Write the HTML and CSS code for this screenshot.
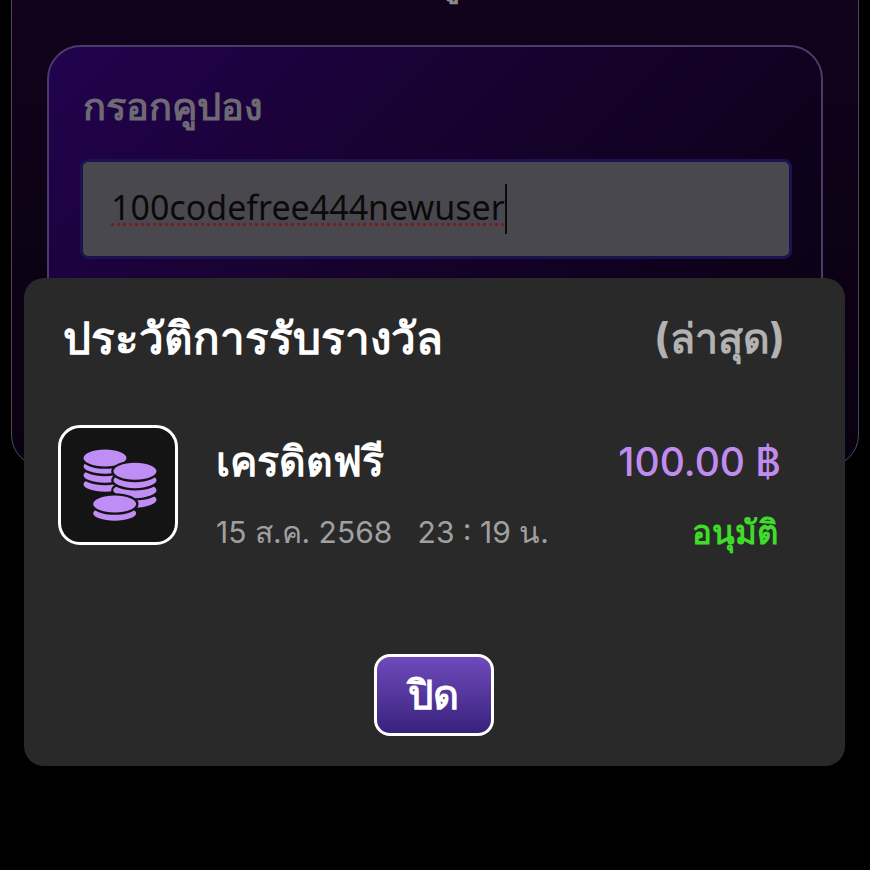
FILE: index.html
```html
<!DOCTYPE html>
<html lang="th">

<head>
    <meta charset="UTF-8">
    <meta name="viewport" content="width=device-width, initial-scale=1.0">
    <title>ประวัติการรับรางวัล</title>
    <link rel="stylesheet" href="styles.css">
</head>

<body>
    <div class="page">
        <div class="outer">
            <div class="page-title">กรอกโค้ดคูปอง</div>
            <div class="coupon">
                <div class="coupon-label">กรอกคูปอง</div>
                <div class="coupon-input">
                    <span class="coupon-value">100codefree444newuser</span><span class="caret"></span>
                </div>
            </div>
        </div>

        <div class="modal">
            <div class="modal-head">
                <div class="modal-title">ประวัติการรับรางวัล</div>
                <div class="modal-latest">(ล่าสุด)</div>
            </div>

            <div class="reward">
                <div class="reward-icon">
                    <svg viewBox="112 106 240 240" width="80" height="80">
                        <g fill="#c08cf5" stroke="#141414" stroke-width="7">
                            <!-- left stack -->
                            <ellipse cx="193" cy="224" rx="68" ry="26"></ellipse>
                            <ellipse cx="193" cy="197" rx="68" ry="26"></ellipse>
                            <ellipse cx="193" cy="170" rx="68" ry="26"></ellipse>
                            <ellipse cx="193" cy="145" rx="68" ry="29"></ellipse>
                            <!-- right stack -->
                            <ellipse cx="283" cy="270" rx="68" ry="27"></ellipse>
                            <ellipse cx="283" cy="242" rx="68" ry="27"></ellipse>
                            <ellipse cx="283" cy="212" rx="68" ry="27"></ellipse>
                            <ellipse cx="283" cy="185" rx="68" ry="29"></ellipse>
                            <!-- front stack -->
                            <ellipse cx="222" cy="311" rx="68" ry="26"></ellipse>
                            <ellipse cx="222" cy="283" rx="68" ry="29"></ellipse>
                        </g>
                        <circle cx="224" cy="241" r="6" fill="#c08cf5"></circle>
                    </svg>
                </div>
                <div class="reward-info">
                    <div class="reward-line">
                        <span class="reward-name">เครดิตฟรี</span>
                        <span class="reward-amount">100.00 ฿</span>
                    </div>
                    <div class="reward-line">
                        <span class="reward-date">15 ส.ค. 2568 &nbsp; 23 : 19 น.</span>
                        <span class="reward-status">อนุมัติ</span>
                    </div>
                </div>
            </div>

            <div class="modal-foot">
                <button class="close-btn">ปิด</button>
            </div>
        </div>
    </div>
</body>

</html>
```
FILE: styles.css
```css
* {
    margin: 0;
    padding: 0;
    box-sizing: border-box;
}

body {
    background: #000;
    font-family: "Inter", "Noto Sans", sans-serif;
}

.page {
    position: relative;
    width: 870px;
    height: 870px;
    overflow: hidden;
}

.outer {
    width: 848px;
    height: 505px;
    margin: -38px 0 0 11px;
    padding: 0 35px;
    border: 1px solid #4d4a55;
    border-radius: 32px;
    background: linear-gradient(180deg, #12021c 0%, #090110 100%);
}

.page-title {
    height: 82px;
    padding-right: 62px;
    font-size: 36px;
    line-height: 36px;
    font-weight: 600;
    text-align: center;
    color: #8a8a8a;
}

.coupon {
    height: 300px;
    padding: 30px 29px 0 31px;
    border: 2px solid #4a3b6b;
    border-radius: 34px;
    background: linear-gradient(135deg, #22024f 0%, #180232 40%, #0a0112 100%);
}

.coupon-label {
    height: 82px;
    padding-left: 3px;
    font-size: 38px;
    line-height: 58px;
    font-weight: 700;
    color: #6e6a74;
}

.coupon-input {
    display: flex;
    align-items: center;
    height: 100px;
    padding-left: 28px;
    border: 3px solid #1b1350;
    border-radius: 8px;
    background: #4a484f;
}

.coupon-value {
    margin-bottom: 4px;
    font-family: "Noto Sans", sans-serif;
    font-size: 34px;
    color: #0a0a0a;
    text-decoration: underline dotted #7a1c24 3px;
    text-underline-offset: 3px;
}

.caret {
    width: 2px;
    height: 50px;
    background: #0a0a0a;
}

.modal {
    position: absolute;
    left: 24px;
    top: 278px;
    width: 821px;
    height: 488px;
    border-radius: 20px;
    background: #292929;
}

.modal-head {
    display: flex;
    justify-content: space-between;
    align-items: center;
    padding: 30px 60px 0 39px;
}

.modal-title {
    font-size: 44px;
    line-height: 60px;
    font-weight: 700;
    color: #fff;
}

.modal-latest {
    font-size: 41px;
    line-height: 60px;
    font-weight: 700;
    color: #b2b2b2;
}

.reward {
    display: flex;
    gap: 38px;
    margin-top: 57px;
    padding: 0 64px 0 34px;
}

.reward-icon {
    display: flex;
    justify-content: center;
    align-items: center;
    width: 120px;
    height: 120px;
    border: 3px solid #fff;
    border-radius: 22px;
    background: #141414;
}

.reward-info {
    flex: 1;
    display: flex;
    flex-direction: column;
    gap: 20px;
    padding-top: 11px;
}

.reward-line {
    display: flex;
    justify-content: space-between;
    align-items: center;
    height: 50px;
}

.reward-name {
    font-size: 41px;
    font-weight: 700;
    color: #fff;
}

.reward-amount {
    font-size: 39px;
    font-weight: 500;
    color: #c08cf0;
}

.reward-date {
    margin-top: 2px;
    font-size: 30px;
    color: #a0a0a0;
}

.reward-status {
    margin: 2px 3px 0 0;
    font-size: 33px;
    font-weight: 700;
    color: #3fdc2a;
}

.modal-foot {
    display: flex;
    justify-content: center;
    margin-top: 98px;
    padding-right: 2px;
}

.close-btn {
    width: 120px;
    height: 82px;
    border: 3px solid #fff;
    border-radius: 16px;
    background: linear-gradient(180deg, #6f4abb 0%, #38227d 100%);
    font-family: inherit;
    font-size: 40px;
    font-weight: 700;
    color: #fff;
}
```
